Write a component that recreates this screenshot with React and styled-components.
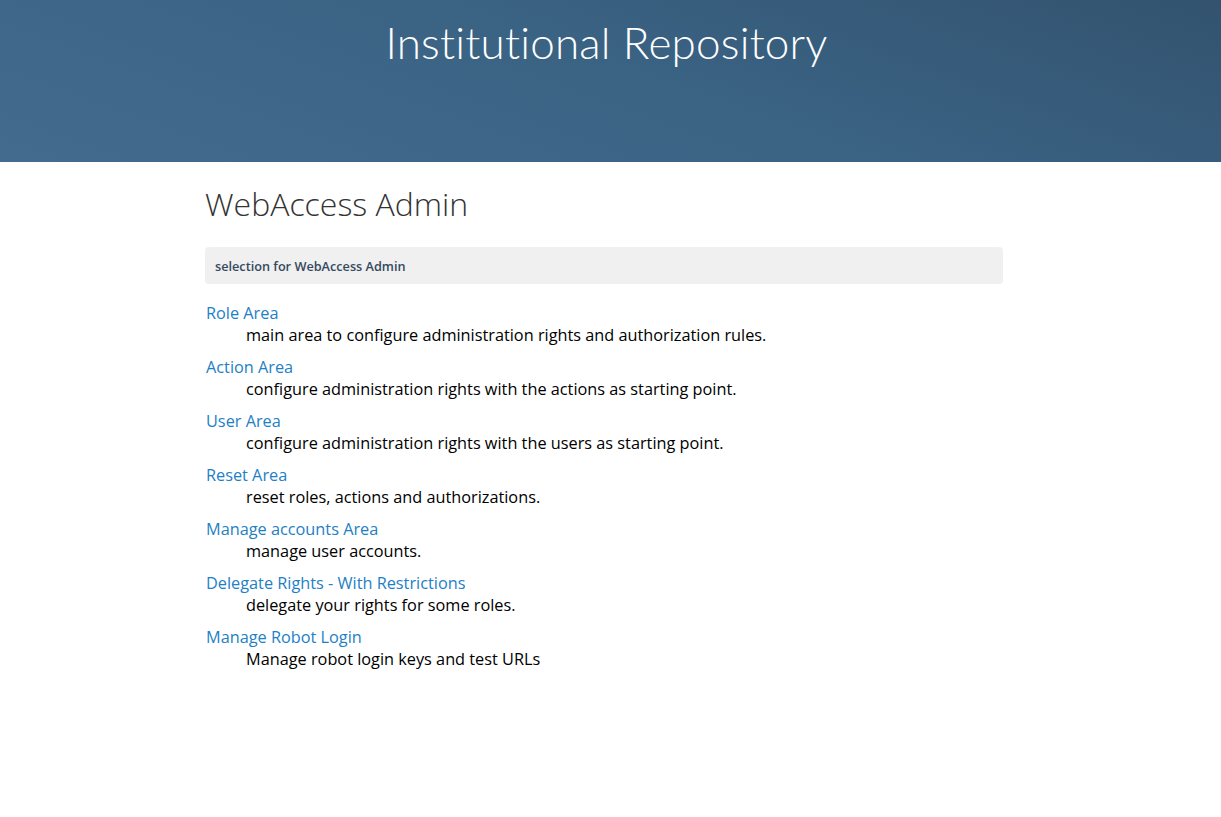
import styled, { createGlobalStyle } from "styled-components";

const GlobalStyle = createGlobalStyle`
  body {
    margin: 0;
    background: #fff;
    font-family: "Open Sans", "Liberation Sans", sans-serif;
    color: #000;
  }
`;

const Banner = styled.header`
  height: 162px;
  background: linear-gradient(200deg, #33536f 0%, #3a6283 45%, #426b8e 100%);
  display: flex;
  justify-content: center;
  align-items: flex-start;
`;

const BannerTitle = styled.h1`
  margin: 14px 0 0 -8px;
  font-family: Lato, "Open Sans", sans-serif;
  font-weight: 300;
  font-size: 44px;
  line-height: 56px;
  color: #fff;
  letter-spacing: 0.2px;
`;

const Main = styled.main`
  width: 798px;
  margin-left: 205px;
  padding-top: 20px;
`;

const PageTitle = styled.h2`
  margin: 0 0 21px;
  font-weight: 300;
  font-size: 32px;
  line-height: 44px;
  color: #333;
`;

const PanelHeading = styled.div`
  background: #f0f0f0;
  border-radius: 4px;
  height: 37px;
  padding: 0 10px;
  display: flex;
  align-items: center;
  font-size: 12.7px;
  font-weight: 600;
  color: #34495e;
`;

const AreaList = styled.dl`
  margin: 18px 0 0;
`;

const AreaLink = styled.a`
  display: block;
  margin-left: 1px;
  font-size: 16.3px;
  line-height: 22px;
  color: #1e80c5;
  text-decoration: none;
`;

const AreaDesc = styled.dd`
  margin: 0 0 10px 41px;
  font-size: 16.3px;
  line-height: 22px;
  color: #000;
`;

const areas = [
  ["Role Area", "main area to configure administration rights and authorization rules."],
  ["Action Area", "configure administration rights with the actions as starting point."],
  ["User Area", "configure administration rights with the users as starting point."],
  ["Reset Area", "reset roles, actions and authorizations."],
  ["Manage accounts Area", "manage user accounts."],
  ["Delegate Rights - With Restrictions", "delegate your rights for some roles."],
  ["Manage Robot Login", "Manage robot login keys and test URLs"],
];

export default function App() {
  return (
    <>
      <GlobalStyle />
      <Banner>
        <BannerTitle>Institutional Repository</BannerTitle>
      </Banner>
      <Main>
        <PageTitle>WebAccess Admin</PageTitle>
        <PanelHeading>selection for WebAccess Admin</PanelHeading>
        <AreaList>
          {areas.map(([name, desc]) => (
            <div key={name}>
              <dt>
                <AreaLink href="#">{name}</AreaLink>
              </dt>
              <AreaDesc>{desc}</AreaDesc>
            </div>
          ))}
        </AreaList>
      </Main>
    </>
  );
}
